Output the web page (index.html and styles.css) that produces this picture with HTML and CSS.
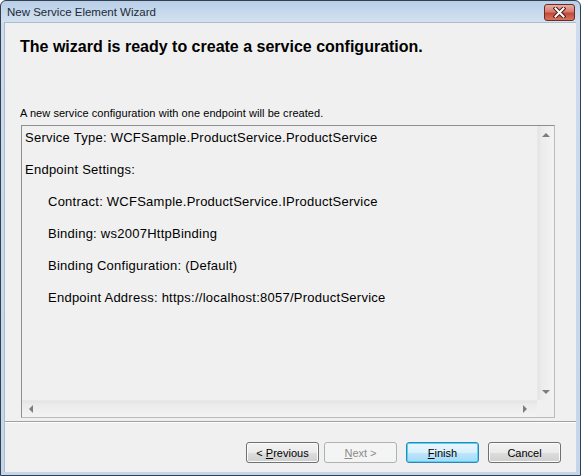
FILE: index.html
```html
<!DOCTYPE html>
<html lang="en">
<head>
    <meta charset="UTF-8">
    <title>New Service Element Wizard</title>
    <link rel="stylesheet" href="styles.css">
</head>
<body>
    <div class="window">
        <div class="titlebar">
            <span class="title">New Service Element Wizard</span>
            <div class="close-btn">
                <svg width="13" height="11" viewBox="0 0 13 11">
                    <path d="M2.5 1.5 L10.5 9.5 M10.5 1.5 L2.5 9.5" stroke="#4a1c16" stroke-width="4" stroke-linecap="square"/>
                    <path d="M2.5 1.5 L10.5 9.5 M10.5 1.5 L2.5 9.5" stroke="#ffffff" stroke-width="2" stroke-linecap="square"/>
                </svg>
            </div>
        </div>
        <div class="client">
            <div class="content">
                <h1>The wizard is ready to create a service configuration.</h1>
                <p class="intro">A new service configuration with one endpoint will be created.</p>
                <div class="summary">
                    <div class="summary-text">
                        <div class="line">Service Type: WCFSample.ProductService.ProductService</div>
                        <div class="line">Endpoint Settings:</div>
                        <div class="line indent">Contract: WCFSample.ProductService.IProductService</div>
                        <div class="line indent">Binding: ws2007HttpBinding</div>
                        <div class="line indent">Binding Configuration: (Default)</div>
                        <div class="line indent">Endpoint Address: https://localhost:8057/ProductService</div>
                    </div>
                    <div class="vscroll">
                        <span class="arrow arrow-up"></span>
                        <span class="arrow arrow-down"></span>
                    </div>
                    <div class="hscroll">
                        <span class="arrow arrow-left"></span>
                        <span class="arrow arrow-right"></span>
                    </div>
                    <div class="corner"></div>
                </div>
            </div>
            <div class="separator"></div>
            <div class="footer">
                <button class="btn"><span>&lt; <u>P</u>revious</span></button>
                <button class="btn btn-disabled"><span><u>N</u>ext &gt;</span></button>
                <button class="btn btn-default gap"><span><u>F</u>inish</span></button>
                <button class="btn gap"><span>Cancel</span></button>
            </div>
        </div>
    </div>
</body>
</html>
```

FILE: styles.css
```css
body {
    margin: 0;
    padding: 0;
    width: 581px;
    height: 476px;
    overflow: hidden;
    font-family: "Liberation Sans", Arial, sans-serif;
    background-color: #ffffff;
}

.window {
    box-sizing: border-box;
    width: 581px;
    height: 476px;
    border: 1px solid #34404e;
    border-radius: 6px 6px 0 0;
    padding: 0 4px 3px 3px;
    background: linear-gradient(to bottom, #b8cfe8 0px, #d3e1f0 21px, #cddcee 22px, #c3d6eb 100%);
    display: flex;
    flex-direction: column;
}

.titlebar {
    height: 21px;
    display: flex;
    align-items: center;
    justify-content: space-between;
    padding-left: 3px;
}

.title {
    font-size: 11.5px;
    color: #1e2a36;
    padding-top: 1px;
}

.close-btn {
    width: 29px;
    height: 15px;
    margin-top: 1px;
    margin-right: 1px;
    border: 1px solid #6b2a22;
    border-radius: 3px;
    background: linear-gradient(to bottom, #e8aea4 0%, #d77b6d 45%, #c14a3a 55%, #d8745f 100%);
    display: flex;
    align-items: center;
    justify-content: center;
}

.client {
    flex: 1;
    background-color: #f0f0f0;
    border-left: 1px solid #a9bcd2;
    border-top: 1px solid #a9bcd2;
    display: flex;
    flex-direction: column;
}

.content {
    padding: 0 15px 0 15px;
}

h1 {
    margin: 14px 0 0 0;
    font-size: 16px;
    line-height: 20px;
    font-weight: bold;
    color: #000000;
}

.intro {
    margin: 50px 0 0 0;
    font-size: 11px;
    line-height: 13px;
    letter-spacing: 0.06px;
    color: #000000;
}

.summary {
    box-sizing: border-box;
    width: 534px;
    height: 293px;
    margin: 5px 0 0 1px;
    border: 1px solid #8d8e90;
    border-right-color: #b9bbbe;
    border-bottom-color: #b9bbbe;
    display: grid;
    grid-template-columns: 1fr 17px;
    grid-template-rows: 1fr 17px;
    background-color: #f0f0f0;
}

.summary-text {
    padding: 4px 0 0 3px;
    font-size: 13px;
    line-height: 16px;
    letter-spacing: 0.25px;
    color: #000000;
    overflow: hidden;
}

.line {
    margin-bottom: 16px;
    white-space: nowrap;
}

.indent {
    padding-left: 23px;
}

.vscroll {
    background: linear-gradient(to right, #e4e4e4 0px, #ececec 4px, #f3f3f3 100%);
    border-left: 1px solid #e8e8e8;
    display: flex;
    flex-direction: column;
    justify-content: space-between;
    align-items: center;
    padding: 7px 0 6px 0;
}

.hscroll {
    background: linear-gradient(to bottom, #e4e4e4 0px, #ececec 4px, #f3f3f3 100%);
    border-top: 1px solid #e8e8e8;
    display: flex;
    justify-content: space-between;
    align-items: center;
    padding: 0 10px 0 7px;
}

.corner {
    background-color: #f0f0f0;
}

.arrow {
    width: 0;
    height: 0;
}

.arrow-up {
    border-left: 4px solid transparent;
    border-right: 4px solid transparent;
    border-bottom: 4px solid #7d7d7d;
}

.arrow-down {
    border-left: 4px solid transparent;
    border-right: 4px solid transparent;
    border-top: 4px solid #7d7d7d;
}

.arrow-left {
    border-top: 4px solid transparent;
    border-bottom: 4px solid transparent;
    border-right: 4px solid #7d7d7d;
}

.arrow-right {
    border-top: 4px solid transparent;
    border-bottom: 4px solid transparent;
    border-left: 4px solid #7d7d7d;
}

.separator {
    margin-top: 3px;
    height: 1px;
    background-color: #a0a0a0;
    border-bottom: 1px solid #ffffff;
}

.footer {
    flex: 1;
    display: flex;
    justify-content: flex-end;
    align-items: flex-start;
    padding: 19px 15px 0 0;
}

.btn {
    box-sizing: border-box;
    width: 73px;
    height: 21px;
    margin-left: 5px;
    padding: 0;
    border: 1px solid #707070;
    border-radius: 3px;
    background: linear-gradient(to bottom, #f2f2f2 0%, #ebebeb 50%, #dddddd 51%, #cfcfcf 100%);
    box-shadow: inset 0 0 0 1px #fbfbfb;
    font-family: "Liberation Sans", Arial, sans-serif;
    font-size: 11px;
    color: #000000;
}

.btn.gap {
    margin-left: 9px;
}

.btn-disabled {
    border-color: #adb2b5;
    background: #f4f4f4;
    box-shadow: none;
    color: #8b8b8b;
}

.btn-default {
    border-color: #3c7fb1;
    background: linear-gradient(to bottom, #eaf6fd 0%, #d9f0fc 50%, #bee6fd 51%, #a7d9f5 100%);
    box-shadow: inset 0 0 0 1px #48d8fb;
}
```
